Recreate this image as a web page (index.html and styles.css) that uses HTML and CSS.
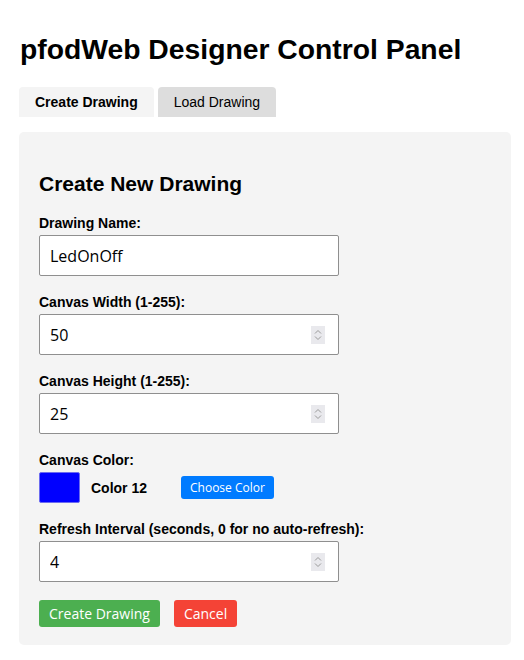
FILE: index.html
```html
<!DOCTYPE html>
<html lang="en">
<head>
    <meta charset="UTF-8">
    <meta name="viewport" content="width=device-width, initial-scale=1.0">
    <title>pfodWeb Designer Control Panel</title>
    <link rel="stylesheet" href="styles.css">
</head>
<body>

    <h1>pfodWeb Designer Control Panel</h1>

    <!-- Tabs -->
    <div class="tabs">
        <button class="tab active">Create Drawing</button>
        <button class="tab">Load Drawing</button>
    </div>

    <!-- Create panel -->
    <div class="panel">
        <h3>Create New Drawing</h3>

        <div class="form-group">
            <label for="drawingName">Drawing Name:</label>
            <div class="field">
                <input type="text" id="drawingName" value="LedOnOff">
            </div>
        </div>

        <div class="form-group">
            <label for="canvasWidth">Canvas Width (1-255):</label>
            <div class="field">
                <input type="number" id="canvasWidth" value="50" min="1" max="255">
                <span class="spinner">
                    <svg width="8" height="12" viewBox="0 0 8 12"><path d="M1 4.5 L4 1.5 L7 4.5 M1 7.5 L4 10.5 L7 7.5" fill="none" stroke="#9a9a9a" stroke-width="1"/></svg>
                </span>
            </div>
        </div>

        <div class="form-group">
            <label for="canvasHeight">Canvas Height (1-255):</label>
            <div class="field">
                <input type="number" id="canvasHeight" value="25" min="1" max="255">
                <span class="spinner">
                    <svg width="8" height="12" viewBox="0 0 8 12"><path d="M1 4.5 L4 1.5 L7 4.5 M1 7.5 L4 10.5 L7 7.5" fill="none" stroke="#9a9a9a" stroke-width="1"/></svg>
                </span>
            </div>
        </div>

        <div class="form-group">
            <label>Canvas Color:</label>
            <div class="color-row">
                <div class="swatch"></div>
                <span class="color-name">Color 12</span>
                <button class="choose-btn">Choose Color</button>
            </div>
        </div>

        <div class="form-group">
            <label for="refreshInterval">Refresh Interval (seconds, 0 for no auto-refresh):</label>
            <div class="field">
                <input type="number" id="refreshInterval" value="4" min="0">
                <span class="spinner">
                    <svg width="8" height="12" viewBox="0 0 8 12"><path d="M1 4.5 L4 1.5 L7 4.5 M1 7.5 L4 10.5 L7 7.5" fill="none" stroke="#9a9a9a" stroke-width="1"/></svg>
                </span>
            </div>
        </div>

        <div class="actions">
            <button class="btn create">Create Drawing</button>
            <button class="btn cancel">Cancel</button>
        </div>
    </div>

</body>
</html>
```

FILE: styles.css
```css
body {
    font-family: "Liberation Sans", Arial, sans-serif;
    margin: 0;
    padding: 0 13px 0 19px;
    color: #000;
    background-color: #fff;
}
h1 {
    font-size: 28.3px;
    margin: 33px 0 22px 1px;
    line-height: 32px;
}
.tabs {
    display: flex;
    gap: 4px;
    margin-bottom: 15px;
}
.tab {
    font-family: "Liberation Sans", Arial, sans-serif;
    font-size: 14px;
    line-height: 16px;
    padding: 7px 16px;
    height: 30px;
    border: none;
    border-radius: 4px 4px 0 0;
    background-color: #ddd;
    color: #000;
    cursor: pointer;
}
.tab.active {
    background-color: #f4f4f4;
    font-weight: bold;
}
.panel {
    background-color: #f4f4f4;
    border-radius: 5px;
    padding: 20px 20px 18px;
}
.panel h3 {
    font-size: 21px;
    line-height: 24px;
    margin: 20px 0 19px;
}
.form-group {
    margin-bottom: 18px;
}
.form-group label {
    display: block;
    font-weight: bold;
    font-size: 14px;
    line-height: 16px;
    margin-bottom: 4px;
}
.field {
    display: flex;
    align-items: center;
    width: 300px;
    height: 41px;
    box-sizing: border-box;
    border: 1px solid #8f8f8f;
    border-radius: 2px;
    background-color: #fff;
}
.field input {
    flex: 1;
    min-width: 0;
    border: none;
    outline: none;
    background: transparent;
    padding: 0 10px;
    font-family: "Open Sans", sans-serif;
    font-size: 16px;
    color: #000;
    -moz-appearance: textfield;
}
.field input::-webkit-inner-spin-button,
.field input::-webkit-outer-spin-button {
    -webkit-appearance: none;
    margin: 0;
}
.spinner {
    display: flex;
    align-items: center;
    justify-content: center;
    width: 14px;
    height: 18px;
    margin-right: 13px;
    background-color: #e9e9ed;
}
.color-row {
    display: flex;
    align-items: center;
    height: 31px;
}
.swatch {
    width: 41px;
    height: 31px;
    box-sizing: border-box;
    background-color: #0000ff;
    border: 1px solid #6b6bf0;
    border-radius: 2px;
}
.color-name {
    font-weight: bold;
    font-size: 14px;
    margin-left: 11px;
    width: 90px;
}
.choose-btn {
    font-family: "Open Sans", sans-serif;
    font-size: 12px;
    line-height: 15px;
    padding: 4px 9px;
    background-color: #007bff;
    color: #fff;
    border: none;
    border-radius: 3px;
    cursor: pointer;
}
.actions {
    display: flex;
    gap: 14px;
}
.btn {
    font-family: "Open Sans", sans-serif;
    font-size: 14px;
    line-height: 19px;
    padding: 4px 10px;
    color: #fff;
    border: none;
    border-radius: 3px;
    cursor: pointer;
}
.btn.create {
    background-color: #4caf50;
}
.btn.cancel {
    background-color: #f44336;
}
```
